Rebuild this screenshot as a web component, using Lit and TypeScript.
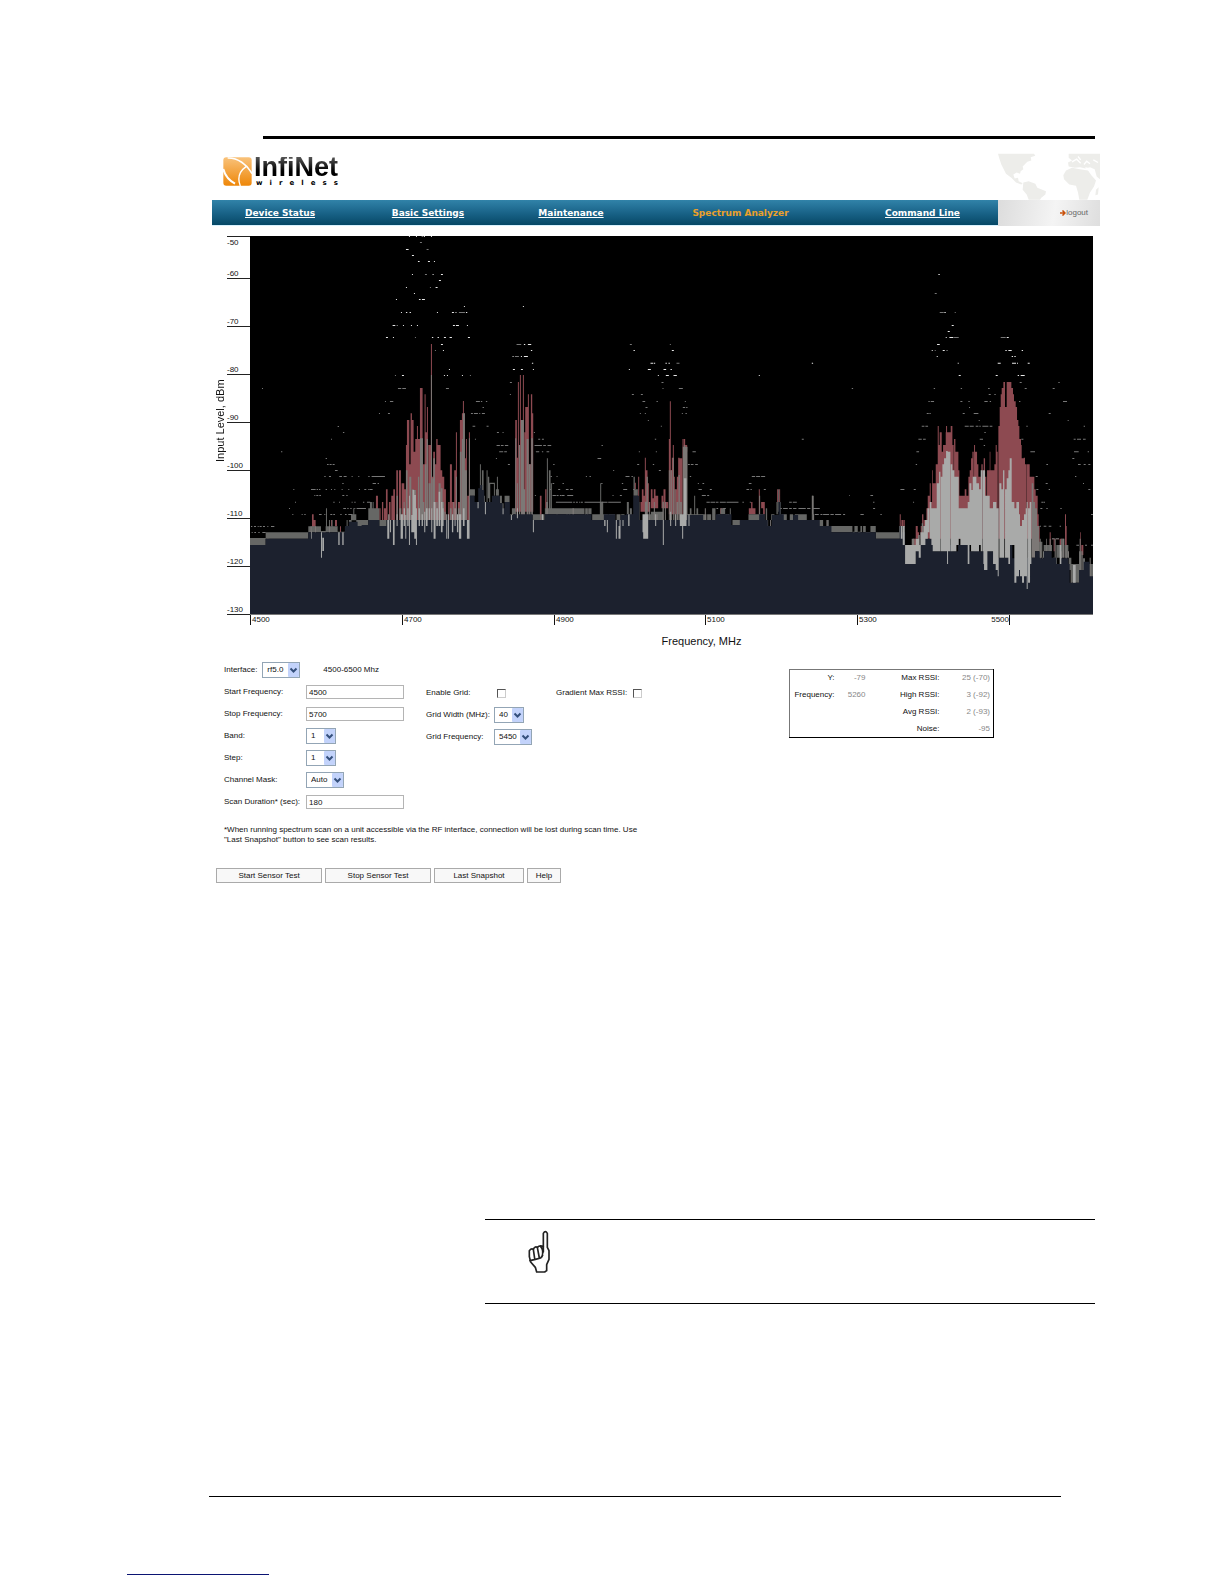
import { LitElement, html, css, svg } from "lit";
import { customElement, property } from "lit/decorators.js";

interface Segment {
  dx: number;
  floor: string;
  band: string;
  peak: string;
  mean: string;
  bright: string;
  dots: string;
}

const SEGMENTS: Segment[] = [
  {
    dx: -135,
    floor: "135 960 182 941 310 922 347 922 420 903 432 890 458 903 470 900 490 885 518 903",
    band:
      "135 47 939 960,182 128 922 941,310 38 904 922,348 14 918 926,362 36 904 922,398 22 920 926,420 12 904 920,432 8 885 903,438 16 868 886,454 36 885 903,490 28 850 885,363 3 850 904,372 3 885 922,380 3 885 906,425 3 885 922,445 3 850 870,460 3 903 922,475 3 903 922,503 3 831 885",
    peak: "321 5 868 912,326 6 885 912,378 3 885 904,390 6 885 904,354 8 922 941,405 3 904 922",
    mean: "317 3 904 941,330 3 904 941,372 3 904 941,186 3 941 960,190 2 941 950,357 3 922 941",
    bright: "348 3 922 998,352 5 938 978,400 4 922 960,412 4 922 960,318 2 920 941",
    dots:
      "904:138,4 147,6 158,3 164,6 174,6 187,3 198,10;922:140,3 148,5 160,4 172,10;850:252,3 415,8 427,4 436,4 448,3 455,28;868:262,3 290,3 298,4 342,8 358,3 376,6 385,5 406,4 420,5 430,12;831:270,3 385,4 402,3 440,3 448,4 474,4 486,10;811:328,3 334,6 343,5 412,6 424,4;793:265,3 318,14 335,4 342,4 362,4 378,3 388,3 410,3 430,3 462,3 478,6 490,4;775:412,4 505,8 518,4;754:358,4 372,6 403,8 416,9 440,3 460,3 490,4 500,24 528,12;736:390,8;718:366,5 374,6 383,6;700:362,4;680:228,4;642:378,3;622:414,4;604:398,4;490:171,3",
  },
  {
    dx: 360,
    floor:
      "0 885 28 903 50 885 110 885 222 885 300 812 314 831 325 790 331 780 337 795 343 831 366 812 390 835 398 850 404 831 420 870 430 868 488 885 525 868 600 868",
    band:
      "0 6 831 885,6 22 850 885,28 22 885 903,300 15 793 812,330 3 718 795,336 5 736 795,342 3 812 868,350 3 736 831,354 4 755 820,358 3 773 831,359 16 773 777,366 6 831 850,372 3 775 812,378 9 793 812,381 3 755 812,390 6 812 835,396 5 835 868,404 15 812 831,421 9 868 885,426 10 850 868,488 24 868 885,514 10 868 885,525 75 850 868,531 3 700 868,537 5 736 868,543 3 775 868,560 3 868 885,590 3 850 885",
    peak:
      "18 6 812 860,28 4 850 885,36 4 831 885,42 6 850 885,48 5 793 885,57 5 831 885,64 10 812 885,70 5 793 885,79 5 736 885,87 6 736 885,95 8 775 885,103 6 793 885,108 3 660 885,111 7 585 885,118 4 718 885,122 4 565 885,126 5 585 885,131 6 680 885,136 14 642 885,141 3 603 885,150 8 489 885,158 6 718 885,164 3 508 885,167 4 622 885,171 3 546 885,175 8 660 885,183 3 357 885,186 6 755 885,190 5 680 885,195 5 718 885,199 4 642 885,203 9 660 885,212 5 736 885,217 6 755 885,223 5 793 885,235 4 831 885,240 6 718 885,246 7 831 885,253 7 736 885,258 3 622 885,264 6 831 885,270 6 585 885,276 8 565 885,279 3 528 885,285 6 700 885,288 3 642 885,292 6 812 885,297 3 622 885,436 5 585 860,438 6 698 860,444 3 471 860,450 3 450 860,453 6 585 860,459 3 450 860,463 4 622 860,466 10 546 860,474 3 508 860,477 6 718 860,483 4 508 860,486 4 565 860,510 5 812 885,526 4 793 868",
    mean:
      "54 5 868 885,80 4 812 885,88 6 850 885,101 3 831 885,108 5 736 885,118 6 755 885,126 6 793 885,132 6 795 885,144 4 755 885,150 9 640 885,158 5 831 885,165 4 718 885,170 4 642 885,176 6 775 885,183 3 450 885,187 4 760 885,190 5 700 885,199 4 831 885,206 6 775 885,213 5 790 885,218 4 831 885,223 4 860 885,240 5 850 885,250 3 831 885,258 3 755 885,264 5 850 885,270 5 680 885,276 3 642 885,279 6 565 885,285 6 736 885,297 3 640 885,436 3 640 870,441 3 775 870,447 4 660 870,453 9 585 870,462 4 793 870,470 6 642 870,477 5 718 870,484 5 640 870,512 3 868 885,529 5 831 868",
    bright:
      "52 6 885 941,60 3 885 922,69 5 885 960,80 3 868 903,92 7 868 941,101 4 850 903,106 3 870 941,112 4 850 903,117 3 812 960,124 4 870 922,128 5 795 922,133 5 810 941,138 3 850 960,146 4 850 903,155 4 868 903,163 3 860 922,168 5 850 903,176 4 850 885,184 3 850 922,191 6 831 941,199 5 850 903,206 5 800 903,213 5 831 922,218 3 850 903,229 3 868 941,234 3 868 941,246 4 868 922,254 3 850 903,261 4 868 922,267 7 868 941,279 5 850 903,291 8 885 941,323 3 831 850,345 3 831 868,398 3 850 868,423 3 870 885,441 3 850 880,489 3 885 922,516 4 868 885",
    dots:
      "34:117,3 138,3 155,5 162,3 183,3;52:150,6;73:108,8 170,6;91:126,6;109:144,5 174,6 192,3;148:126,3 165,6 188,3 213,6;166:207,6;187:108,3 180,3 197,6;205:132,3;223:78,3 147,5 156,9;262:93,3 108,4 119,4 201,3 246,6 255,6 267,18 288,4;244:282,3 459,3;301:68,8 80,4 99,3 123,3 141,3 249,6 258,9 291,3;337:48,6 69,3 135,3 186,4 203,4 222,6 239,7 294,6;358:213,6 440,14 462,4 474,10;376:195,3 219,3 483,4;394:428,3 435,12 453,3 462,12;414:486,4;433:237,3 429,6 453,6 489,3;451:75,3 96,6 222,3 231,3 276,3 300,3;472:420,6;490:84,10 97,11 228,9;508:420,3;529:45,3 60,10 318,12 333,4 348,4;547:338,4;565:27,3 54,6 303,6 312,12 328,3 336,9;603:308,8 350,6;622:381,6 398,3 492,3;642:315,3 505,6 516,6;661:380,10 393,8 405,10 494,22 520,8 533,10;680:388,12 403,8 498,10 516,4 530,8;700:378,3;718:414,6;754:12,10 27,18 560,3;775:8,8 548,5;793:0,8 540,3 565,6 590,6;811:495,3 548,8 560,5 570,5 580,4 592,6;831:558,18 580,10 594,6",
  },
  {
    dx: 900,
    floor:
      "0 868 125 885 162 868 196 885 212 870 228 868 250 812 264 812 268 885 295 885 340 885 398 885 412 870 460 885 498 868 545 900 570 885 590 885 628 868 645 885 654 903 666 870 686 831 692 868 702 885 730 870 745 885 795 885 810 903 845 922",
    band:
      "0 57 850 868,58 14 850 868,72 32 850 868,106 8 850 868,115 10 850 868,127 8 868 885,134 16 868 885,150 10 830 885,151 3 775 885,160 14 868 886,176 20 868 885,200 12 868 885,214 10 868 885,231 6 831 868,240 6 850 885,251 4 755 812,254 10 793 812,266 3 831 885,295 8 868 885,303 37 860 885,330 10 868 885,412 40 868 885,420 5 850 885,433 3 812 868,440 5 850 868,450 20 868 885,472 12 868 885,487 10 850 885,503 8 868 885,512 14 850 868,527 9 868 885,540 3 850 890,548 24 885 903,572 22 885 900,596 20 868 885,616 28 868 885,648 4 850 885,654 12 903 922,664 10 868 885,680 4 831 868,685 3 793 860,689 4 831 885,695 16 868 885,714 6 885 903,720 10 868 885,735 36 868 885,774 8 885 903,786 6 812 885,798 22 885 903,822 5 903 922,832 5 885 903,843 57 903 922",
    peak:
      "152 6 831 850,254 4 773 793,265 3 755 831,249 3 868 885,272 4 831 860,276 5 793 860,281 4 812 860,285 3 698 860,288 5 736 860,293 4 775 860,297 4 831 860,303 5 793 850,308 4 820 850,312 5 793 850,317 8 812 850,335 5 812 850,341 6 793 850,347 8 831 850,357 4 642 868,360 3 529 868,363 3 736 868,366 4 698 868,369 3 660 868,372 3 755 868,376 5 793 868,381 5 755 868,385 4 698 868,389 8 700 868,398 3 642 868,402 4 642 665,406 6 660 680,511 8 850 866,597 20 850 868,604 4 831 850,627 3 793 868,634 10 831 850,640 5 831 868,682 3 793 831,688 3 793 831",
    mean:
      "58 3 868 885,68 4 850 885,106 3 868 885,112 3 868 885,285 5 830 885,290 4 755 885,297 3 831 885,312 3 831 885,320 4 868 885,338 4 830 885,345 3 831 885,357 3 736 885,362 4 736 885,369 3 698 885,374 3 793 885,380 5 831 885,386 4 750 885,391 5 831 885,399 14 665 885,402 3 660 885,459 3 885 903,465 3 850 903,478 3 885 903,535 3 868 903,628 3 812 885,652 3 885 922,661 3 885 922,705 3 885 922,718 3 885 922,728 3 903 922,753 3 885 922,775 3 885 922,781 3 903 922,790 3 868 922,822 3 903 922,830 3 885 922,838 3 903 922,787 3 812 868",
    bright:
      "163 4 885 903,171 3 885 922,198 3 885 941,206 6 903 941,209 3 885 903,218 3 885 903,235 4 868 903,280 15 868 941,278 4 868 922,316 3 868 903,339 3 885 960,361 3 860 903,376 3 868 903,390 20 868 903,397 3 885 941,402 8 760 903,416 3 868 903",
    dots:
      "358:240,6 360,3;376:251,4 366,6;414:302,8 312,4 347,4 356,4 380,9 786,4;433:237,3 294,9 341,8 362,4;451:324,3 348,9 371,10 627,3;472:335,6;490:338,3 387,12;508:246,6 273,6;529:278,8 320,4 405,3;547:287,6 399,7 409,4;565:270,3 285,3 396,3 407,4;586:294,3;603:333,3;642:315,4 756,6;661:0,4 155,4;680:267,3 318,3 428,10;700:143,11;718:10,4 262,6 309,4 414,6 423,8 436,8;736:190,3 327,6;754:2,4 108,3 119,4 227,12 245,4 420,4 606,10 619,12 634,12;775:38,4 154,4 216,4 444,3 458,5 597,8;793:48,6 61,8 220,12 250,4 446,10 480,6 590,8 602,4 642,6;811:10,8 22,4 36,4 52,18 188,3 210,6 456,12 472,6 898,2;831:18,14 35,10 48,6 57,10 70,5 78,6 88,3 93,6 104,48 155,18 175,38 470,10 482,14 498,8 510,18 530,36 578,4 600,3 718,8 729,12;850:500,5 520,8 692,4 700,14 718,8 730,10 746,22 772,10 790,20;868:795,12 812,6 820,18 842,10 856,18 880,6",
  },
  {
    dx: 1800,
    floor:
      "0 922 78 941 150 903 154 922 166 1017 198 960 220 941 240 941 250 979 300 960 308 979 325 960 360 979 372 960 388 979 398 979 430 1000 446 998 478 960 488 1000 520 998 542 998 556 979 570 1000 582 979 606 998 620 1017 632 1000 656 1017 660 1073 688 1035 702 1010 720 1054",
    band:
      "0 8 903 922,14 10 903 922,32 5 903 922,40 8 903 922,48 14 922 941,62 16 903 922,9 6 920 941,25 7 920 941,78 70 922 941,148 3 903 941,568 10 950 998,582 25 960 979,610 12 998 1017,620 20 960 998,634 8 941 979,645 11 960 998,657 8 998 1035,665 23 1017 1073,688 8 979 1035,700 6 1000 1035,706 6 1017 1054,714 16 1017 1073",
    peak:
      "150 3 868 903,155 5 885 903,161 4 885 905,190 9 941 960,198 6 903 941,204 4 922 941,213 6 903 941,217 4 868 941,222 7 885 941,230 4 850 941,234 7 812 941,240 3 775 941,244 3 831 941,247 2 736 941,249 10 775 941,258 6 718 941,264 3 603 941,267 4 660 941,270 6 622 941,276 4 680 941,280 8 660 941,288 16 622 941,289 3 603 941,303 5 603 941,307 5 660 941,313 4 642 941,317 9 680 941,326 3 736 941,329 16 812 941,345 5 793 941,350 6 812 941,356 4 755 941,360 4 736 941,364 4 700 941,368 4 680 941,373 3 660 941,376 6 680 941,382 4 718 941,386 9 755 941,395 4 718 941,402 4 700 941,406 4 755 941,412 22 736 941,420 2 680 941,434 6 718 941,438 3 660 941,441 3 680 941,446 4 603 941,450 3 546 941,453 3 508 941,456 5 489 941,461 5 471 941,466 5 546 941,471 4 471 941,475 10 471 941,485 5 489 941,489 4 508 941,493 5 529 941,498 4 546 941,501 5 585 941,505 4 603 941,509 5 642 941,512 4 660 941,516 6 700 941,522 4 698 941,526 5 718 941,532 8 718 941,540 6 755 941,546 8 755 941,554 4 793 941,557 7 812 941,563 4 868 950,566 4 903 960,600 3 922 960,606 10 941 943,612 3 941 979,618 10 941 943,630 11 941 960,646 3 868 960,649 2 903 960,691 2 922 979,695 6 960 990",
    mean:
      "153 3 903 922,186 8 941 1017,205 5 930 975,216 4 895 960,228 6 903 941,546 5 775 998,551 5 831 998,556 6 850 979,562 6 903 979,570 3 941 1054,577 3 998 1054,589 2 941 979,600 3 941 979,615 3 941 998,634 3 979 1035,640 4 941 998,648 3 960 1054,655 3 979 998,663 3 1035 1110,690 3 941 1054,696 3 979 1073,705 3 1054 1092,720 3 998 1110",
    bright:
      "153 5 903 941,159 6 903 960,166 32 960 1017,190 7 960 1017,198 10 941 979,207 6 960 998,212 9 922 960,221 6 903 960,226 8 885 941,233 6 850 922,240 5 831 941,245 4 850 960,249 13 850 979,261 8 775 979,268 4 740 979,273 6 755 979,278 5 718 979,283 6 700 979,289 5 678 979,294 8 680 979,298 4 700 979,303 5 718 979,307 7 736 979,314 6 755 979,320 7 755 960,292 3 979 1017,303 3 960 979,327 5 850 941,332 12 850 960,344 10 850 960,354 5 831 1017,359 6 775 960,364 5 795 979,369 6 755 979,375 5 755 979,380 8 775 979,388 6 793 960,393 4 736 979,398 8 736 979,401 5 736 1017,405 8 812 1035,413 7 812 979,420 10 850 979,430 10 831 1017,438 6 850 1035,444 3 850 1054,449 6 775 998,455 6 793 998,460 4 736 998,466 6 793 998,471 6 760 998,476 5 736 1017,480 6 700 960,486 8 831 960,494 6 850 1073,500 8 831 1054,507 4 868 1035,511 6 903 1054,517 6 885 1073,523 5 868 1054,528 6 850 1054,531 3 831 1092,535 6 850 1073,540 5 831 1017,403 3 960 1035,580 2 979 998,630 5 960 1017,670 8 1020 1073",
    dots:
      "148:266,4;205:255,6;262:270,12 284,4 315,3;301:306,6;319:294,6;337:288,3 299,12 313,14 453,15 471,6;358:262,8;376:246,3 255,3 279,6 290,4 467,4 476,10 516,4;394:261,3 486,4 494,4;414:324,3 444,9 487,12 502,3 534,6;451:327,6 438,6 504,4 513,12;472:510,6 626,4;490:6,4 252,4 333,4 415,5 525,6 609,6;508:417,6 434,4;529:236,4 243,10 332,6 356,4 404,10 420,4 508,4 640,12;547:358,3;565:231,6 239,4 339,6 372,14 597,6;586:387,3 654,3;603:216,8 227,8 345,12 360,12 378,8 389,4 398,18 420,8 530,4 702,4;622:404,4;642:206,10 220,8 390,10 515,6 672,6 682,12 700,8;661:402,4;680:200,8 542,14 673,14 714,4;700:668,6;718:198,4 590,5 685,8 702,6 716,6;754:558,6 676,4;775:588,6 700,3;793:152,12 192,6 560,6 597,4 716,6;811:62,8;831:70,4 190,3 575,6 582,4;850:70,6 572,6 590,4 632,4;868:32,10 92,4 724,6;903:570,4 582,8 597,8 630,4;941:607,8 618,10;960:680,8 706,6 724,6",
  },
];

const PLOT_W = 2530;
const PLOT_H = 1134;
const TOP = 33;

const bars = (data: string, dx: number) =>
  data
    .split(",")
    .map((b) => {
      const [x, w, y1, y2] = b.trim().split(" ").map(Number);
      return `M${x + dx} ${y1 - TOP}h${w}V${y2 - TOP}h${-w}z`;
    })
    .join("");

const steps = (segments: Segment[]) => {
  let d = `M0 ${PLOT_H}`;
  for (const s of segments) {
    const n = s.floor.split(" ").map(Number);
    for (let i = 0; i < n.length; i += 2) {
      d += `H${n[i] + s.dx}V${n[i + 1] - TOP}`;
    }
  }
  return `${d}H${PLOT_W}V${PLOT_H}z`;
};

const dots = (data: string, dx: number, faint: boolean) =>
  data
    .split(";")
    .map((row) => {
      const [y, list] = row.split(":");
      return list
        .split(" ")
        .map((p) => p.split(",").map(Number))
        .filter(([x, w]) => faint === (+y > 455 || w > 12 || x % 5 === 0))
        .map(([x, w]) => `M${x + dx} ${+y - TOP - 1}h${w}v3h${-w}z`)
        .join("");
    })
    .join("");

const layer = (key: "band" | "peak" | "mean" | "bright") =>
  SEGMENTS.map((s) => bars(s[key], s.dx)).join("");

@customElement("spectrum-plot")
export class SpectrumPlot extends LitElement {
  static styles = css`
    :host { display: grid; grid-template-columns: 15px 23px 1fr; padding-right: 7px;
      font-family: "Liberation Sans", Arial, sans-serif; color: #111; }
    .ytitle { writing-mode: vertical-rl; transform: rotate(180deg); text-align: center;
      font-size: 11px; line-height: 17px; padding-top: 9px; }
    .yaxis { display: grid; grid-template-rows: 43px repeat(7, 48px); font-size: 8px; line-height: 9px; }
    .ytick { display: flex; align-items: flex-end; border-bottom: 1px solid #222; }
    .ytick.first { border-top: 1px solid #222; flex-direction: column; align-items: flex-start;
      justify-content: space-between; padding-top: 1px; }
    .plot { display: block; width: 100%; height: 378px; background: #000; border-bottom: 1px solid #777; }
    .xaxis { grid-column: 3; display: grid; grid-template-columns: 152fr 152fr 151fr 152fr 152fr 84fr;
      font-size: 8px; line-height: 10px; }
    .xtick { border-left: 1px solid #111; padding-left: 1px; display: flex; justify-content: space-between; }
    .xtitle { grid-column: 3; text-align: center; font-size: 11px; line-height: 13px;
      padding: 10px 0 0 60px; }
    .floor { fill: #1c212e; }
    .band { fill: #666765; }
    .peak { fill: #8d4a51; }
    .mean { fill: #7c7876; }
    .bright { fill: #a9aaa9; }
    .dot { fill: #e8e8e8; }
    .dim { fill: #777; }
  `;

  render() {
    const levels = [-70, -80, -90, -100, -110, -120, -130];
    return html`
      <div class="ytitle">Input Level, dBm</div>
      <div class="yaxis">
        <div class="ytick first"><span>-50</span><span>-60</span></div>
        ${levels.map((l) => html`<div class="ytick">${l}</div>`)}
      </div>
      <svg class="plot" viewBox="0 0 ${PLOT_W} ${PLOT_H}" preserveAspectRatio="none"
        role="img" aria-label="Spectrum">
        ${svg`
          <path class="peak" d=${layer("peak")}></path>
          <path class="band" d=${layer("band")}></path>
          <path class="mean" d=${layer("mean")}></path>
          <path class="floor" d=${steps(SEGMENTS)}></path>
          <path class="bright" d=${layer("bright")}></path>
          <path class="dim" d=${SEGMENTS.map((s) => dots(s.dots, s.dx, true)).join("")}></path>
          <path class="dot" d=${SEGMENTS.map((s) => dots(s.dots, s.dx, false)).join("")}></path>
        `}
      </svg>
      <div class="xaxis">
        <div class="xtick">4500</div>
        <div class="xtick">4700</div>
        <div class="xtick">4900</div>
        <div class="xtick">5100</div>
        <div class="xtick"><span>5300</span><span>5500</span></div>
        <div class="xtick"></div>
      </div>
      <div class="xtitle">Frequency, MHz</div>
    `;
  }
}

@customElement("drop-down")
export class DropDown extends LitElement {
  @property() label = "";
  @property() value = "";
  @property({ type: Number }) labelWidth = 0;
  @property() size = "s";

  static styles = css`
    :host { display: flex; align-items: center; height: 22px; }
    label { white-space: nowrap; }
    .wide { width: 82px; }
    .mid { width: 68px; }
    .auto { padding-right: 5px; }
    .box { display: grid; height: 16px; }
    .s { width: 30px; }
    .m { width: 38px; }
    select { grid-area: 1 / 1; appearance: none; width: 100%; height: 16px; margin: 0; padding: 0 0 0 4px;
      border: 1px solid #93a5b5; border-radius: 0; background: #fff; color: #111;
      font: 8px/14px "Liberation Sans", Arial, sans-serif; }
    svg { grid-area: 1 / 1; justify-self: end; align-self: center; width: 11px; height: 14px;
      margin-right: 1px; pointer-events: none; }
  `;

  render() {
    const lw = this.labelWidth > 80 ? "wide" : this.labelWidth > 0 ? "mid" : "auto";
    return html`
      <label class=${lw} for="s">${this.label}</label>
      <span class="box ${this.size}">
        <select id="s"><option>${this.value}</option></select>
        <svg viewBox="0 0 11 14">
          <rect width="11" height="14" rx="1" fill="#c3d3fb"></rect>
          <path d="M2.5 5.5l3 3 3-3" fill="none" stroke="#35507c" stroke-width="2"></path>
        </svg>
      </span>
    `;
  }
}

@customElement("app-root")
export class AppRoot extends LitElement {
  static styles = css`
    :host { display: block; min-height: 1584px; box-sizing: border-box; padding-top: 136px; background: #fff;
      font: 8px/10px "Liberation Sans", Arial, sans-serif; color: #111; }
    .toprule { height: 3px; margin: 0 129px 0 263px; background: #000; }
    .screen { margin: 14px 124px 0 212px; }
    .brand { display: flex; justify-content: space-between; height: 47px; }
    .logo { display: flex; gap: 2px; padding: 4px 0 0 11px; }
    .mark { width: 29px; height: 29px; }
    .name { font-size: 27px; line-height: 20px; font-weight: bold; color: #1a1a1a;
      background: linear-gradient(#555, #000 70%); background-clip: text; -webkit-background-clip: text;
      -webkit-text-fill-color: transparent; }
    .sub { display: flex; justify-content: space-between; padding: 2px 0 0 2px;
      font: bold 7px/8px "DejaVu Sans", sans-serif; color: #000; }
    .map { width: 102px; height: 47px; }
    .bar { display: flex; }
    nav { flex: 786; display: grid; grid-template-columns: 136fr 160fr 126fr 213fr 151fr; height: 25px;
      background: linear-gradient(#3183a9, #1a6489 50%, #064866); border-bottom: 1px solid #d9f2ff; }
    nav a { display: grid; place-content: center; color: #fff; white-space: nowrap;
      font: bold 9px/12px "DejaVu Sans", Verdana, sans-serif; }
    nav a.on { color: #e9a02b; text-decoration: none; }
    .exit { flex: 102; display: flex; align-items: center; justify-content: flex-end;
      background: linear-gradient(100deg, #dcdcdc, #f4f4f4 55%, #dedede); }
    .exit a { display: flex; align-items: center; margin-right: 12px; color: #666; font-size: 8px;
      text-decoration: none; }
    .exit svg { width: 6px; height: 6px; }
    spectrum-plot { margin-top: 10px; }
    form { margin: 0; padding-top: 11px; }
    .panel { display: flex; align-items: flex-start; padding-left: 12px; }
    .left { width: 202px; }
    .mid { width: 130px; padding-top: 23px; }
    .right { padding-top: 23px; }
    .row { display: flex; align-items: center; height: 22px; }
    .row label { width: 82px; white-space: nowrap; }
    .mid .row label { width: 71px; }
    .right .row label { width: 77px; }
    .range { padding-left: 23px; }
    .text { box-sizing: border-box; width: 98px; height: 14px; margin: 0; padding: 0 2px; border: 1px solid #b4b4b4;
      border-radius: 0; font: inherit; color: inherit; background: #fff; }
    .check { appearance: none; width: 9px; height: 9px; margin: 0; border: 1px solid #ccc;
      border-top-color: #555; border-left-color: #555; background: #fff; }
    .readout { margin: 10px 106px 0 auto; border: 1px solid #000; border-top-color: #777; border-left-color: #777;
      border-collapse: collapse; }
    .readout th, .readout td { height: 17px; padding: 0; text-align: right; font-weight: normal; box-sizing: border-box; }
    .readout td { color: #888; }
    .k1 { width: 45px; }
    .v1 { width: 31px; }
    .k2 { width: 74px; }
    .v2 { width: 54px; }
    .readout .v2 { padding-right: 3px; }
    .note { max-width: 430px; margin: 12px 0 0; padding-left: 12px; }
    .actions { display: flex; gap: 3px; padding: 23px 0 0 4px; }
    button { height: 15px; padding: 0; border: 1px solid #aaa; border-radius: 0; background: #f8f8f8;
      font: inherit; color: inherit; }
    .w1 { width: 106px; }
    .w2 { width: 90px; }
    .w3 { width: 34px; }
    .callout { margin: 336px 129px 0 485px; height: 83px; border: solid #000; border-width: 1px 0; }
    .hand { display: block; width: 22px; height: 43px; margin: 10px 0 0 43px; }
    .footrule { margin: 192px 163px 0 209px; border-top: 1px solid #000; }
    .link { width: 142px; margin: 77px 0 0 127px; border-top: 1px solid #0b1473; }
  `;

  render() {
    return html`
      <div class="toprule"></div>
      <div class="screen">
        <header>
          <div class="brand">
            <div class="logo">
              <svg class="mark" viewBox="0 0 87 87" aria-hidden="true">
                <defs>
                  <linearGradient id="o" x1="0" y1="0" x2="0" y2="1">
                    <stop offset="0" stop-color="#f9c27a"></stop>
                    <stop offset="1" stop-color="#ee8709"></stop>
                  </linearGradient>
                </defs>
                <rect x="1" y="1" width="85" height="85" rx="9" fill="url(#o)"></rect>
                <path d="M14 3C44 2 72 22 87 50" fill="none" stroke="#fff" stroke-width="5"></path>
                <path d="M1 36C6 56 18 70 36 80" fill="none" stroke="#fff" stroke-width="6"></path>
                <path d="M70 28C50 42 42 62 52 87" fill="none" stroke="#fff" stroke-width="4"></path>
              </svg>
              <div>
                <div class="name">InfiNet</div>
                <div class="sub">${[..."wireless"].map((c) => html`<span>${c}</span>`)}</div>
              </div>
            </div>
            <svg class="map" viewBox="0 0 306 140" aria-hidden="true">
              <g fill="#ededea">
                <path d="M0 2H108L112 8 98 12 100 22 88 26 74 40 76 48 68 54 66 62 56 58 46 64 50 76 60 74 62 84 74 90 70 94 54 88 40 74 24 62 10 34 4 16z"></path>
                <path d="M76 88L92 84 112 92 118 104 144 114 142 124 130 134 126 140H92L86 124 74 110z"></path>
                <path d="M212 2H306V78L296 70 290 48 276 42 262 46 246 42 230 44 212 40 210 28 222 22 212 14z"></path>
                <path d="M204 52L222 44 246 48 270 52 280 66 294 82 288 100 276 118 268 140H244L240 118 234 98 214 94 198 78 196 66z"></path>
                <path d="M294 110L302 102 300 124 292 126z"></path>
              </g>
              <path d="M222 26L236 18 248 30M258 34L266 24 276 32M240 10L248 20M262 44L280 48M286 20L300 28" stroke="#fff" stroke-width="4" fill="none"></path>
            </svg>
          </div>
          <div class="bar">
            <nav>
              <a href="#status">Device Status</a>
              <a href="#settings">Basic Settings</a>
              <a href="#maintenance">Maintenance</a>
              <a class="on" href="#spectrum">Spectrum Analyzer</a>
              <a href="#cli">Command Line</a>
            </nav>
            <div class="exit">
              <a href="#logout">
                <svg viewBox="0 0 6 6" aria-hidden="true">
                  <path d="M0 3H5M2.500 .5L5 3 2.500 5.500" fill="none" stroke="#c8500a" stroke-width="1.500"></path>
                </svg>logout</a>
            </div>
          </div>
        </header>

        <spectrum-plot></spectrum-plot>

        <form @submit=${(e: Event) => e.preventDefault()}>
          <div class="panel">
            <div class="left">
              <div class="row">
                <drop-down label="Interface:" value="rf5.0" size="m"></drop-down>
                <span class="range">4500-6500 Mhz</span>
              </div>
              <div class="row"><label for="start">Start Frequency:</label><input class="text" id="start" value="4500" /></div>
              <div class="row"><label for="stop">Stop Frequency:</label><input class="text" id="stop" value="5700" /></div>
              <drop-down label="Band:" value="1" .labelWidth=${82}></drop-down>
              <drop-down label="Step:" value="1" .labelWidth=${82}></drop-down>
              <drop-down label="Channel Mask:" value="Auto" size="m" .labelWidth=${82}></drop-down>
              <div class="row"><label for="dur">Scan Duration* (sec):</label><input class="text" id="dur" value="180" /></div>
            </div>
            <div class="mid">
              <div class="row"><label for="grid">Enable Grid:</label><input class="check" id="grid" type="checkbox" /></div>
              <drop-down label="Grid Width (MHz):" value="40" .labelWidth=${68}></drop-down>
              <drop-down label="Grid Frequency:" value="5450" size="m" .labelWidth=${68}></drop-down>
            </div>
            <div class="right">
              <div class="row"><label for="grad">Gradient Max RSSI:</label><input class="check" id="grad" type="checkbox" /></div>
            </div>
            <table class="readout">
              <tr><th class="k1">Y:</th><td class="v1">-79</td><th class="k2">Max RSSI:</th><td class="v2">25 (-70)</td></tr>
              <tr><th>Frequency:</th><td>5260</td><th>High RSSI:</th><td class="v2">3 (-92)</td></tr>
              <tr><th></th><td></td><th>Avg RSSI:</th><td class="v2">2 (-93)</td></tr>
              <tr><th></th><td></td><th>Noise:</th><td class="v2">-95</td></tr>
            </table>
          </div>
          <p class="note">*When running spectrum scan on a unit accessible via the RF interface, connection will be lost during scan time. Use "Last&nbsp;Snapshot" button to see scan results.</p>
          <div class="actions">
            <button class="w1">Start Sensor Test</button>
            <button class="w1">Stop Sensor Test</button>
            <button class="w2">Last Snapshot</button>
            <button class="w3">Help</button>
          </div>
        </form>
      </div>

      <div class="callout">
        <svg class="hand" viewBox="0 0 66 129" aria-hidden="true">
          <g fill="#fff" stroke="#222" stroke-width="5" stroke-linejoin="round" stroke-linecap="round">
            <path d="M46 50V10Q52 0 58 10V52L63 62V88L56 104V122L50 126H26L22 112 8 96 4 80V62Q10 54 16 58 20 48 28 52 36 44 46 50z"></path>
            <path d="M16 58L20 86M28 52L34 84M38 50Q48 60 42 80M6 92L22 88 38 84 44 76M46 50V66" fill="none"></path>
          </g>
        </svg>
      </div>
      <div class="footrule"></div>
      <div class="link"></div>
    `;
  }
}
